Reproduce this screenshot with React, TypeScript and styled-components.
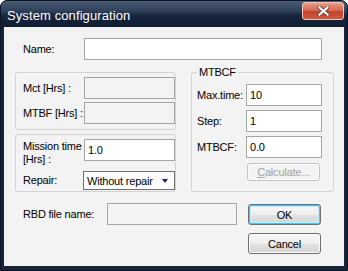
import React from 'react'
import styled, { createGlobalStyle } from 'styled-components'

const colors = {
  frame: '#17243a',
  face: '#f3f3f3',
  text: '#000000',
  boxBorder: '#a5a5a5',
  groupBorder: '#d3d3d3',
  disabledText: '#a3a3a3',
}

const GlobalStyle = createGlobalStyle`
  html, body {
    margin: 0;
    padding: 0;
    background: #ffffff;
  }
  body {
    font-family: "Liberation Sans", Arial, sans-serif;
    font-size: 11px;
    color: ${colors.text};
  }
`

// Window chrome
const Window = styled.div`
  width: 348px;
  height: 271px;
  display: flex;
  flex-direction: column;
  background: ${colors.frame};
  border-radius: 7px 7px 0 0;
  overflow: hidden;
  box-sizing: border-box;
  border: 1px solid #0b1424;
`

const TitleBar = styled.div`
  height: 26px;
  flex: none;
  display: flex;
  align-items: center;
  justify-content: space-between;
  padding: 0 3px 0 6px;
  background: linear-gradient(#4a5b73 0%, #2e3f59 40%, #17253e 55%, #111d33 100%);
`

const Title = styled.span`
  color: #ffffff;
  font-size: 13px;
  padding-top: 3px;
  letter-spacing: 0.1px;
`

const CloseButton = styled.div`
  width: 40px;
  height: 16px;
  margin-top: -6px;
  display: flex;
  align-items: center;
  justify-content: center;
  border: 1px solid #f1c6bc;
  border-radius: 3px;
  background: linear-gradient(#e79d8b 0%, #d66a52 45%, #c2412a 55%, #cf5a3f 100%);
`

const Client = styled.div`
  flex: 1;
  margin: 0 3px 4px;
  background: ${colors.face};
  display: flex;
  flex-direction: column;
  padding: 11px 10px 0 11px;
  letter-spacing: -0.2px;
`

// Rows and fields
const Row = styled.div<{ $indent?: number }>`
  display: flex;
  align-items: center;
  padding-left: ${({ $indent }) => $indent ?? 0}px;
`

const Label = styled.span<{ $w: number }>`
  width: ${({ $w }) => $w}px;
  flex: none;
  line-height: 13px;
  white-space: nowrap;
`

const TextBox = styled.div<{ $w: number; $disabled?: boolean }>`
  width: ${({ $w }) => $w}px;
  height: 22px;
  flex: none;
  box-sizing: border-box;
  border: 1px solid ${colors.boxBorder};
  background: ${({ $disabled }) => ($disabled ? colors.face : '#ffffff')};
  padding: 3px 0 0 3px;
  line-height: 14px;
`

const Middle = styled.div`
  display: grid;
  grid-template-columns: 161px 143px;
  column-gap: 15px;
  margin-top: 12px;
`

const LeftColumn = styled.div`
  display: flex;
  flex-direction: column;
  gap: 4px;
`

const GroupBox = styled.div<{ $gap: number }>`
  position: relative;
  box-sizing: border-box;
  height: 58px;
  border: 1px solid ${colors.groupBorder};
  border-radius: 3px;
  padding: 4px 0 0 7px;
  display: flex;
  flex-direction: column;
  gap: ${({ $gap }) => $gap}px;
`

const RightBox = styled(GroupBox)`
  height: 120px;
  padding: 11px 0 0 5px;
`

const Legend = styled.span`
  position: absolute;
  top: -7px;
  left: 5px;
  padding: 0 2px;
  background: ${colors.face};
  line-height: 13px;
`

const TwoLineRow = styled.div`
  display: flex;
  align-items: flex-start;
  padding-top: 1px;
  margin-bottom: -1px;
`

const Select = styled.div`
  width: 92px;
  height: 19px;
  margin-left: -1px;
  box-sizing: border-box;
  border: 1px solid #6f6f6f;
  background: #ffffff;
  display: flex;
  align-items: center;
  justify-content: space-between;
  padding: 0 6px 0 3px;
`

const Arrow = styled.span`
  width: 0;
  height: 0;
  border-left: 3.5px solid transparent;
  border-right: 3.5px solid transparent;
  border-top: 4px solid #1b1f6e;
`

const Button = styled.div<{ $focused?: boolean; $disabled?: boolean; $h?: number }>`
  width: 73px;
  height: ${({ $h }) => $h ?? 21}px;
  box-sizing: border-box;
  display: flex;
  align-items: center;
  justify-content: center;
  border-radius: 3px;
  border: 1px solid ${({ $disabled }) => ($disabled ? '#c4c4c4' : '#707070')};
  color: ${({ $disabled }) => ($disabled ? colors.disabledText : colors.text)};
  background: ${({ $disabled }) =>
    $disabled ? colors.face : 'linear-gradient(#f8f8f8 0%, #eeeeee 50%, #e2e2e2 51%, #d6d6d6 100%)'};
  box-shadow: ${({ $focused }) =>
    $focused ? 'inset 0 0 0 1px #3ec6f4, inset 0 0 0 2px #c5eefc' : 'inset 0 0 0 1px #fcfcfc'};
  u {
    text-decoration: underline;
  }
`

const CalcRow = styled.div`
  padding: 1px 0 0 50px;
`

const Footer = styled.div`
  display: flex;
  align-items: flex-start;
  margin-top: 11px;
  padding-left: 8px;
`

const FooterField = styled.div`
  display: flex;
  align-items: center;
`

const ButtonColumn = styled.div`
  display: flex;
  flex-direction: column;
  gap: 8px;
  margin: 1px 0 0 11px;
`

const CloseIcon = () => (
  <svg width="13" height="10" viewBox="0 0 13 10">
    <path d="M2.5 1.5 L10.5 8.5 M10.5 1.5 L2.5 8.5" stroke="#6b3a33" strokeWidth="3.8" strokeLinecap="square" />
    <path d="M2.5 1.5 L10.5 8.5 M10.5 1.5 L2.5 8.5" stroke="#ffffff" strokeWidth="2.3" strokeLinecap="square" />
  </svg>
)

export default function App() {
  return (
    <>
      <GlobalStyle />
      <Window>
        <TitleBar>
          <Title>System configuration</Title>
          <CloseButton>
            <CloseIcon />
          </CloseButton>
        </TitleBar>
        <Client>
          <Row $indent={8}>
            <Label $w={61}>Name:</Label>
            <TextBox $w={238} />
          </Row>

          <Middle>
            <LeftColumn>
              <GroupBox $gap={3}>
                <Row>
                  <Label $w={61}>Mct [Hrs] :</Label>
                  <TextBox $w={91} $disabled />
                </Row>
                <Row>
                  <Label $w={61}>MTBF [Hrs] :</Label>
                  <TextBox $w={91} $disabled />
                </Row>
              </GroupBox>
              <GroupBox $gap={6}>
                <TwoLineRow>
                  <Label $w={61}>
                    Mission time
                    <br />
                    [Hrs] :
                  </Label>
                  <TextBox $w={91} style={{ marginTop: -1 }}>1.0</TextBox>
                </TwoLineRow>
                <Row>
                  <Label $w={61}>Repair:</Label>
                  <Select>
                    <span>Without repair</span>
                    <Arrow />
                  </Select>
                </Row>
              </GroupBox>
            </LeftColumn>

            <RightBox $gap={4}>
              <Legend>MTBCF</Legend>
              <Row>
                <Label $w={49}>Max.time:</Label>
                <TextBox $w={76}>10</TextBox>
              </Row>
              <Row>
                <Label $w={49}>Step:</Label>
                <TextBox $w={76}>1</TextBox>
              </Row>
              <Row>
                <Label $w={49}>MTBCF:</Label>
                <TextBox $w={76}>0.0</TextBox>
              </Row>
              <CalcRow>
                <Button $disabled $h={18}>
                  <span>
                    <u>C</u>alculate...
                  </span>
                </Button>
              </CalcRow>
            </RightBox>
          </Middle>

          <Footer>
            <FooterField>
              <Label $w={84}>RBD file name:</Label>
              <TextBox $w={130} $disabled />
            </FooterField>
            <ButtonColumn>
              <Button $focused>OK</Button>
              <Button>Cancel</Button>
            </ButtonColumn>
          </Footer>
        </Client>
      </Window>
    </>
  )
}
